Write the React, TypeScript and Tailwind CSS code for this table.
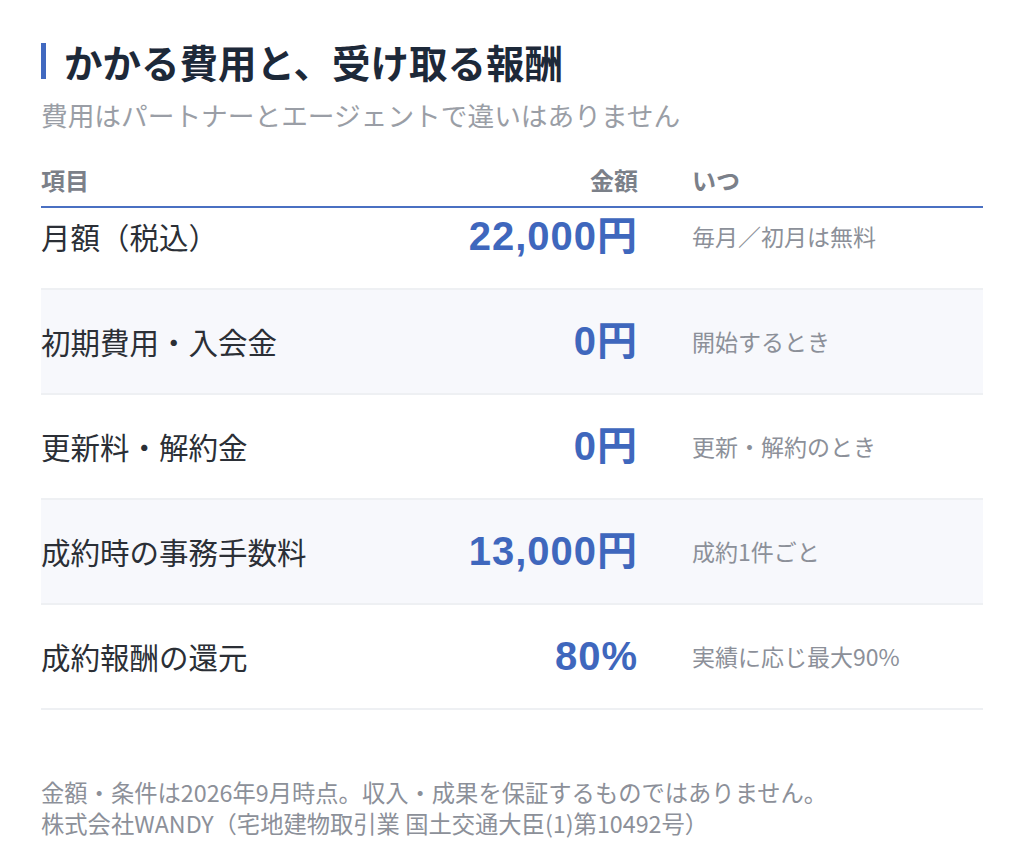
type Row = {
    label: string,
    amount: string,
    when: string,
    shaded: boolean
}

const rows: Row[] = [
    { label: "月額（税込）", amount: "22,000円", when: "毎月／初月は無料", shaded: false },
    { label: "初期費用・入会金", amount: "0円", when: "開始するとき", shaded: true },
    { label: "更新料・解約金", amount: "0円", when: "更新・解約のとき", shaded: false },
    { label: "成約時の事務手数料", amount: "13,000円", when: "成約1件ごと", shaded: true },
    { label: "成約報酬の還元", amount: "80%", when: "実績に応じ最大90%", shaded: false },
]

const jp = "font-['Noto_Sans_CJK_JP',sans-serif]"
const num = "font-['Liberation_Sans','Noto_Sans_CJK_JP',sans-serif]"

export default function App () {
    return (
        <div className={`min-h-[860px] w-full bg-white px-[41px] pt-[43px] ${jp}`}>
            <div className="flex h-[36px] items-center gap-[18px]">
                <span className="h-[36px] w-[5px] bg-[#4169c0]" />
                <h1 className="text-[38.5px] font-bold leading-[36px] text-[#1d2939]">かかる費用と、受け取る報酬</h1>
            </div>
            <p className="mt-[18px] text-[26.7px] leading-[36px] text-[#9a9ea6]">費用はパートナーとエージェントで違いはありません</p>

            <div className="mt-[31px] w-[942px]">
                <div className="grid grid-cols-[1fr_198px_291px] gap-x-[54px] border-b-2 border-[#4a70c2] pb-[10px] text-[24px] font-bold leading-[32px] text-[#7b8089]">
                    <span>項目</span>
                    <span className="text-right">金額</span>
                    <span>いつ</span>
                </div>
                {rows.map((r, i) => (
                    <div
                        key={r.label}
                        className={`grid grid-cols-[1fr_198px_291px] items-center gap-x-[54px] border-b-2 border-[#eef0f3] ${r.shaded ? "bg-[#f7f8fc]" : "bg-white"} ${i === 0 ? "pt-[6px] pb-[30px]" : "pt-[29px] pb-[30px]"}`}
                    >
                        <span className="text-[29.5px] leading-[44px] text-[#2b2f36]">{r.label}</span>
                        <span className={`text-right text-[40px] font-bold leading-[44px] tracking-[1px] text-[#3f67bd] ${num}`}>{r.amount}</span>
                        <span className="text-[23px] leading-[44px] text-[#8c9099]">{r.when}</span>
                    </div>
                ))}
            </div>

            <div className="mt-[67px] text-[23.3px] leading-[31px] text-[#8c9099]">
                <p>金額・条件は2026年9月時点。収入・成果を保証するものではありません。</p>
                <p>株式会社WANDY（宅地建物取引業 国土交通大臣(1)第10492号）</p>
            </div>
        </div>
    )
}
